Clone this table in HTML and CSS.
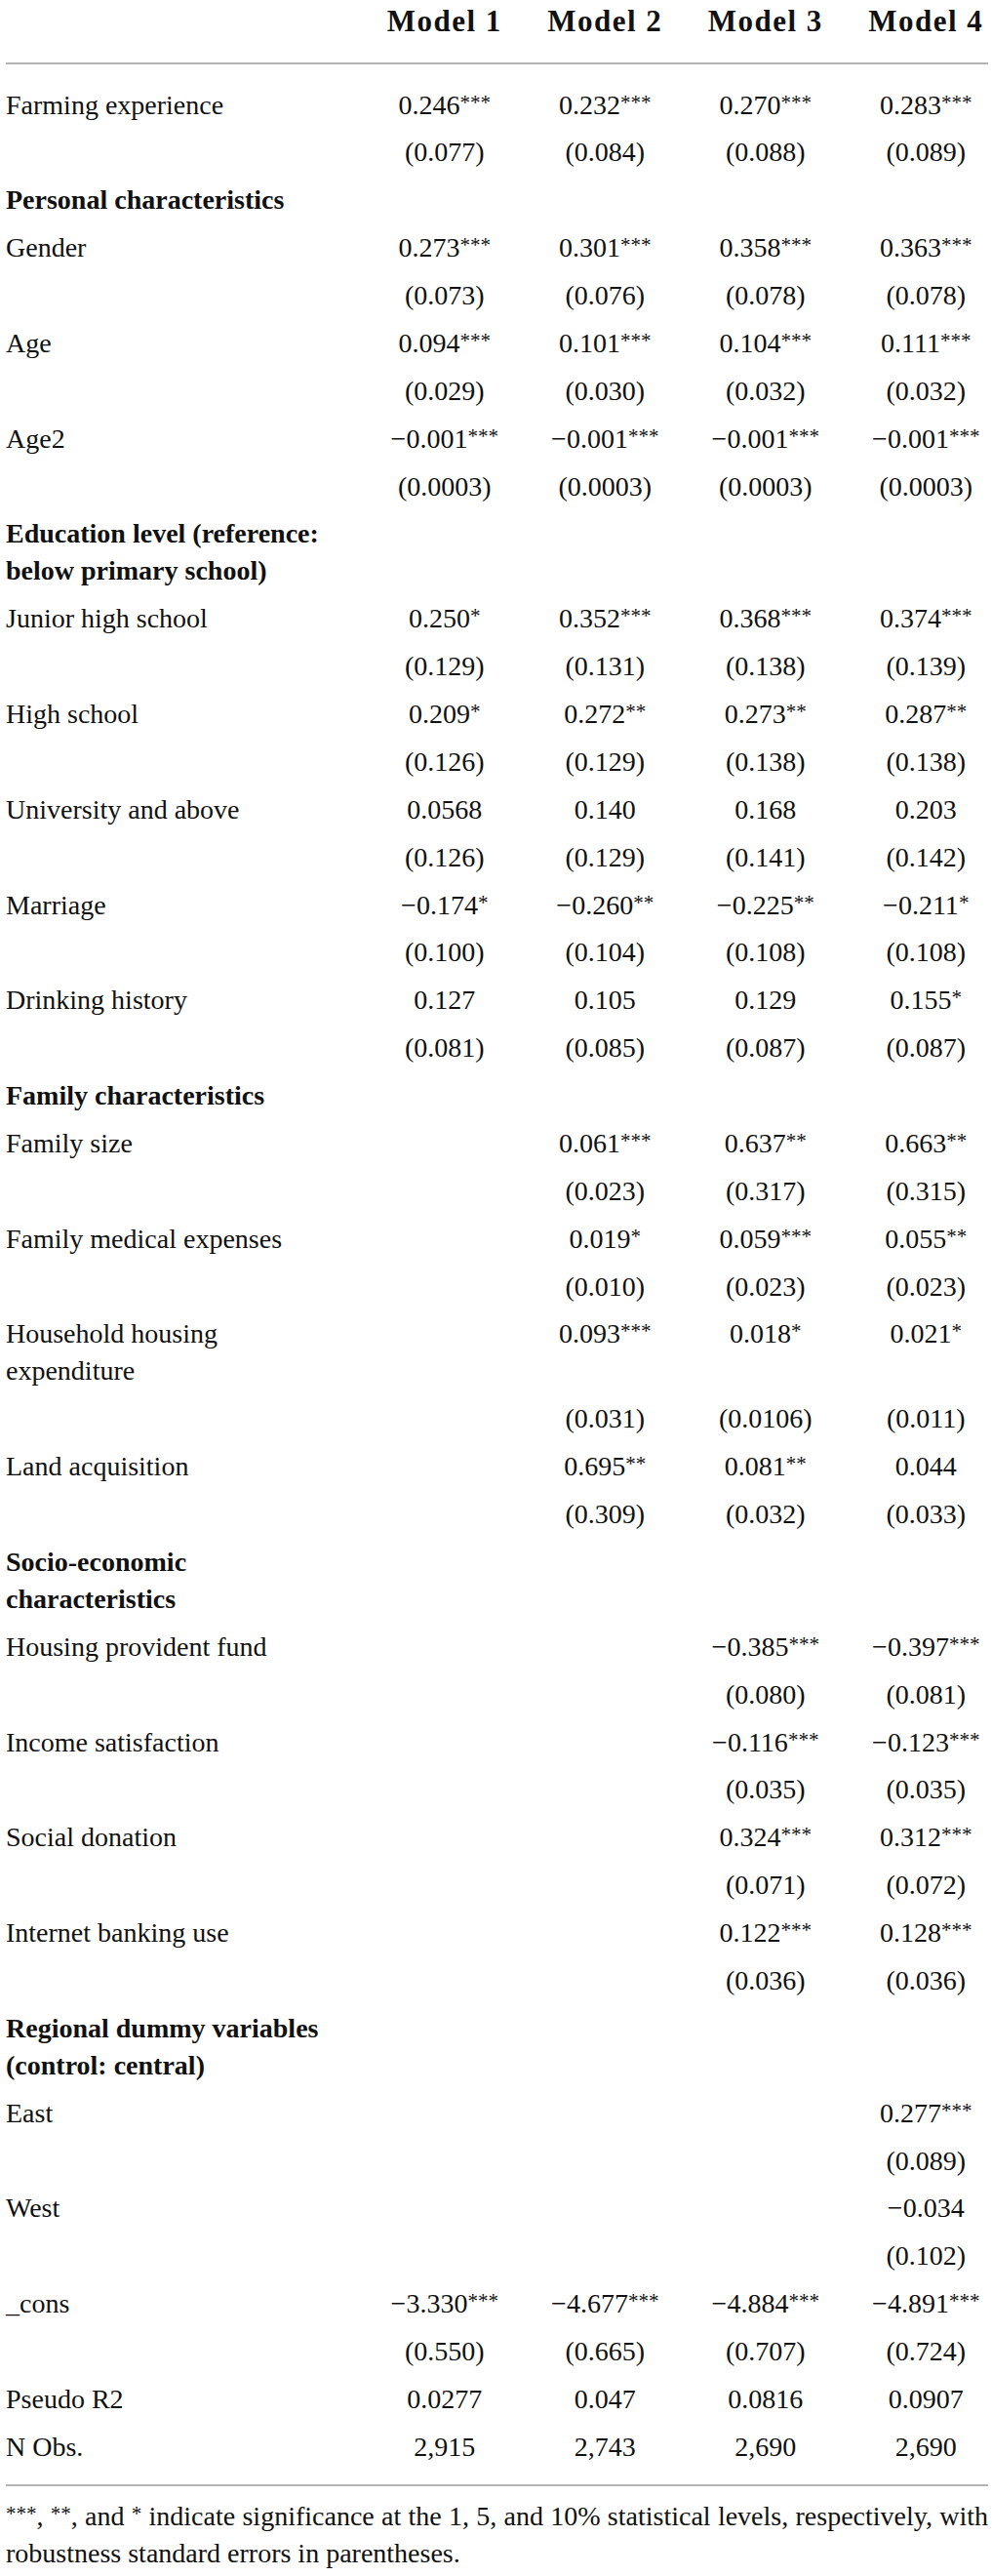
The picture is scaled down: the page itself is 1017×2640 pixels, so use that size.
FILE: index.html
```html
<!DOCTYPE html>
<html lang="en">
<head>
<meta charset="utf-8">
<title>Regression results</title>
<link rel="stylesheet" href="styles.css">
</head>
<body>
<div class="wrap">
<table class="res">
  <colgroup>
    <col class="c-label">
    <col class="c-model">
    <col class="c-model">
    <col class="c-model">
    <col class="c-model">
  </colgroup>
  <thead>
    <tr><th class="lab"></th><th>Model 1</th><th>Model 2</th><th>Model 3</th><th>Model 4</th></tr>
  </thead>
  <tbody>
    <tr class="first"><td class="lab">Farming experience</td><td>0.246<span class="s">***</span></td><td>0.232<span class="s">***</span></td><td>0.270<span class="s">***</span></td><td>0.283<span class="s">***</span></td></tr>
    <tr><td class="lab"></td><td>(0.077)</td><td>(0.084)</td><td>(0.088)</td><td>(0.089)</td></tr>
    <tr><td class="lab grp">Personal characteristics</td><td></td><td></td><td></td><td></td></tr>
    <tr><td class="lab">Gender</td><td>0.273<span class="s">***</span></td><td>0.301<span class="s">***</span></td><td>0.358<span class="s">***</span></td><td>0.363<span class="s">***</span></td></tr>
    <tr><td class="lab"></td><td>(0.073)</td><td>(0.076)</td><td>(0.078)</td><td>(0.078)</td></tr>
    <tr><td class="lab">Age</td><td>0.094<span class="s">***</span></td><td>0.101<span class="s">***</span></td><td>0.104<span class="s">***</span></td><td>0.111<span class="s">***</span></td></tr>
    <tr><td class="lab"></td><td>(0.029)</td><td>(0.030)</td><td>(0.032)</td><td>(0.032)</td></tr>
    <tr><td class="lab">Age2</td><td>&minus;0.001<span class="s">***</span></td><td>&minus;0.001<span class="s">***</span></td><td>&minus;0.001<span class="s">***</span></td><td>&minus;0.001<span class="s">***</span></td></tr>
    <tr><td class="lab"></td><td>(0.0003)</td><td>(0.0003)</td><td>(0.0003)</td><td>(0.0003)</td></tr>
    <tr><td class="lab grp">Education level (reference: below primary school)</td><td></td><td></td><td></td><td></td></tr>
    <tr><td class="lab">Junior high school</td><td>0.250<span class="s">*</span></td><td>0.352<span class="s">***</span></td><td>0.368<span class="s">***</span></td><td>0.374<span class="s">***</span></td></tr>
    <tr><td class="lab"></td><td>(0.129)</td><td>(0.131)</td><td>(0.138)</td><td>(0.139)</td></tr>
    <tr><td class="lab">High school</td><td>0.209<span class="s">*</span></td><td>0.272<span class="s">**</span></td><td>0.273<span class="s">**</span></td><td>0.287<span class="s">**</span></td></tr>
    <tr><td class="lab"></td><td>(0.126)</td><td>(0.129)</td><td>(0.138)</td><td>(0.138)</td></tr>
    <tr><td class="lab">University and above</td><td>0.0568</td><td>0.140</td><td>0.168</td><td>0.203</td></tr>
    <tr><td class="lab"></td><td>(0.126)</td><td>(0.129)</td><td>(0.141)</td><td>(0.142)</td></tr>
    <tr><td class="lab">Marriage</td><td>&minus;0.174<span class="s">*</span></td><td>&minus;0.260<span class="s">**</span></td><td>&minus;0.225<span class="s">**</span></td><td>&minus;0.211<span class="s">*</span></td></tr>
    <tr><td class="lab"></td><td>(0.100)</td><td>(0.104)</td><td>(0.108)</td><td>(0.108)</td></tr>
    <tr><td class="lab">Drinking history</td><td>0.127</td><td>0.105</td><td>0.129</td><td>0.155<span class="s">*</span></td></tr>
    <tr><td class="lab"></td><td>(0.081)</td><td>(0.085)</td><td>(0.087)</td><td>(0.087)</td></tr>
    <tr><td class="lab grp">Family characteristics</td><td></td><td></td><td></td><td></td></tr>
    <tr><td class="lab">Family size</td><td></td><td>0.061<span class="s">***</span></td><td>0.637<span class="s">**</span></td><td>0.663<span class="s">**</span></td></tr>
    <tr><td class="lab"></td><td></td><td>(0.023)</td><td>(0.317)</td><td>(0.315)</td></tr>
    <tr><td class="lab">Family medical expenses</td><td></td><td>0.019<span class="s">*</span></td><td>0.059<span class="s">***</span></td><td>0.055<span class="s">**</span></td></tr>
    <tr><td class="lab"></td><td></td><td>(0.010)</td><td>(0.023)</td><td>(0.023)</td></tr>
    <tr><td class="lab">Household housing expenditure</td><td></td><td>0.093<span class="s">***</span></td><td>0.018<span class="s">*</span></td><td>0.021<span class="s">*</span></td></tr>
    <tr><td class="lab"></td><td></td><td>(0.031)</td><td>(0.0106)</td><td>(0.011)</td></tr>
    <tr><td class="lab">Land acquisition</td><td></td><td>0.695<span class="s">**</span></td><td>0.081<span class="s">**</span></td><td>0.044</td></tr>
    <tr><td class="lab"></td><td></td><td>(0.309)</td><td>(0.032)</td><td>(0.033)</td></tr>
    <tr><td class="lab grp">Socio-economic characteristics</td><td></td><td></td><td></td><td></td></tr>
    <tr><td class="lab">Housing provident fund</td><td></td><td></td><td>&minus;0.385<span class="s">***</span></td><td>&minus;0.397<span class="s">***</span></td></tr>
    <tr><td class="lab"></td><td></td><td></td><td>(0.080)</td><td>(0.081)</td></tr>
    <tr><td class="lab">Income satisfaction</td><td></td><td></td><td>&minus;0.116<span class="s">***</span></td><td>&minus;0.123<span class="s">***</span></td></tr>
    <tr><td class="lab"></td><td></td><td></td><td>(0.035)</td><td>(0.035)</td></tr>
    <tr><td class="lab">Social donation</td><td></td><td></td><td>0.324<span class="s">***</span></td><td>0.312<span class="s">***</span></td></tr>
    <tr><td class="lab"></td><td></td><td></td><td>(0.071)</td><td>(0.072)</td></tr>
    <tr><td class="lab">Internet banking use</td><td></td><td></td><td>0.122<span class="s">***</span></td><td>0.128<span class="s">***</span></td></tr>
    <tr><td class="lab"></td><td></td><td></td><td>(0.036)</td><td>(0.036)</td></tr>
    <tr><td class="lab grp">Regional dummy variables (control: central)</td><td></td><td></td><td></td><td></td></tr>
    <tr><td class="lab">East</td><td></td><td></td><td></td><td>0.277<span class="s">***</span></td></tr>
    <tr><td class="lab"></td><td></td><td></td><td></td><td>(0.089)</td></tr>
    <tr><td class="lab">West</td><td></td><td></td><td></td><td>&minus;0.034</td></tr>
    <tr><td class="lab"></td><td></td><td></td><td></td><td>(0.102)</td></tr>
    <tr><td class="lab">_cons</td><td>&minus;3.330<span class="s">***</span></td><td>&minus;4.677<span class="s">***</span></td><td>&minus;4.884<span class="s">***</span></td><td>&minus;4.891<span class="s">***</span></td></tr>
    <tr><td class="lab"></td><td>(0.550)</td><td>(0.665)</td><td>(0.707)</td><td>(0.724)</td></tr>
    <tr><td class="lab">Pseudo R2</td><td>0.0277</td><td>0.047</td><td>0.0816</td><td>0.0907</td></tr>
    <tr><td class="lab">N Obs.</td><td>2,915</td><td>2,743</td><td>2,690</td><td>2,690</td></tr>
  </tbody>
</table>
<p class="note"><span class="s">***</span>, <span class="s">**</span>, and <span class="s">*</span> indicate significance at the 1, 5, and 10% statistical levels, respectively, with robustness standard errors in parentheses.</p>
</div>
</body>
</html>
```

FILE: styles.css
```css
html, body {
  margin: 0;
  padding: 0;
  background: #ffffff;
}

body {
  font-family: "Liberation Serif", "Times New Roman", serif;
  color: #111111;
  font-size: 28px;
}

.wrap {
  margin: 0 4px 0 6px;
}

.res {
  width: 100%;
  border-collapse: collapse;
  table-layout: fixed;
}

.c-model {
  width: 164.5px;
}

.res th,
.res td {
  padding: 5.45px 0 5.45px 37px;
  text-align: center;
  vertical-align: top;
  line-height: 38px;
  font-weight: normal;
}

.res .lab {
  padding-left: 0;
  padding-right: 10px;
  text-align: left;
}

.res td.grp {
  font-weight: bold;
}

.res thead th {
  font-size: 31px;
  font-weight: bold;
  letter-spacing: 1.5px;
  line-height: 40px;
  padding-top: 1.5px;
  padding-bottom: 22.5px;
  border-bottom: 2px solid #b3b3b3;
}

.res tbody tr.first td {
  padding-top: 22.5px;
}

.s {
  font-size: 0.75em;
  line-height: 1;
  vertical-align: 5px;
}

.note {
  margin: 14px 0 0 0;
  padding-top: 11.5px;
  border-top: 2px solid #b3b3b3;
  line-height: 38px;
  text-align: justify;
}
```
